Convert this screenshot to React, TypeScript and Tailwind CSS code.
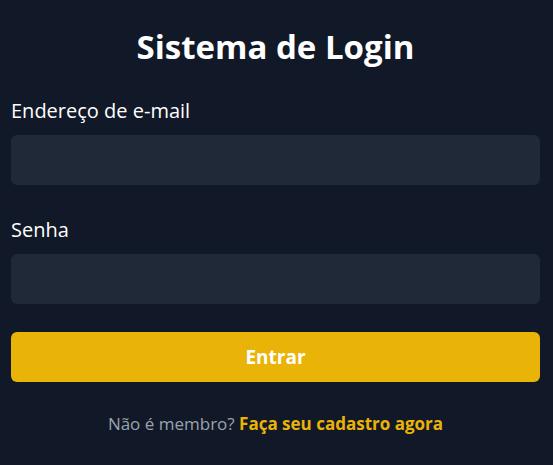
export default function App() {
  return (
    <main className="min-h-screen bg-[#111827] pt-6 pr-[13px] pl-[11px] font-['Open_Sans','Noto_Sans',sans-serif] text-white">
      <h1 className="text-center text-[33px] leading-[46px] font-bold">Sistema de Login</h1>
      <form className="mt-6" onSubmit={(e) => e.preventDefault()}>
        <label htmlFor="email" className="block text-[20px] leading-[34px]">
          Endereço de e-mail
        </label>
        <input
          id="email"
          type="email"
          className="mt-[7px] block h-[50px] w-full rounded-md bg-[#1f2937] px-3 text-[20px] outline-none"
        />
        <label htmlFor="password" className="mt-7 block text-[20px] leading-[34px]">
          Senha
        </label>
        <input
          id="password"
          type="password"
          className="mt-[7px] block h-[50px] w-full rounded-md bg-[#1f2937] px-3 text-[20px] outline-none"
        />
        <button
          type="submit"
          className="mt-7 block h-[50px] w-full rounded-md bg-[#eab308] text-[19px] font-bold"
        >
          Entrar
        </button>
      </form>
      <p className="mt-7 text-center text-[17px] leading-[28px] text-[#9ca3af]">
        Não é membro?{" "}
        <a href="#cadastro" className="font-bold text-[#eab308]">
          Faça seu cadastro agora
        </a>
      </p>
    </main>
  );
}
